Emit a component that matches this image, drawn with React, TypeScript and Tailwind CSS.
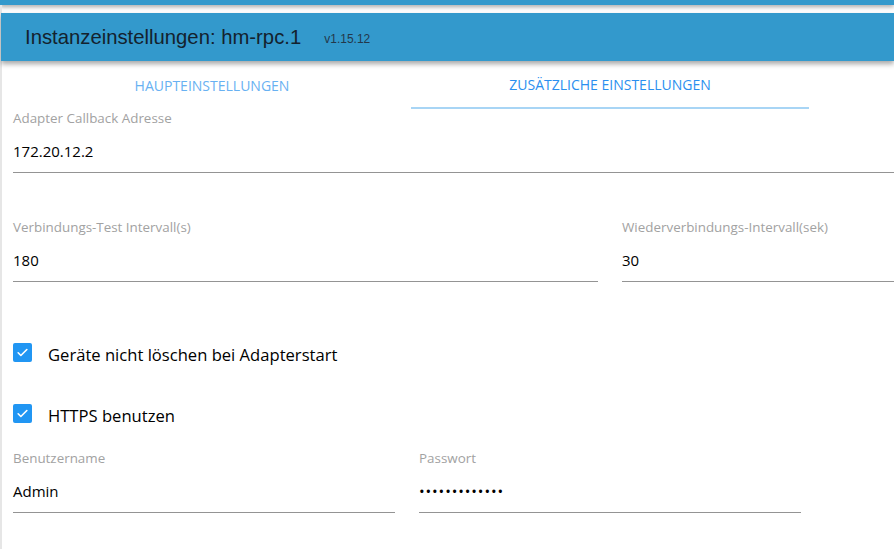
import React from 'react';

const sans = "font-['Open_Sans','Noto_Sans',sans-serif]";

function Field({ label, value, secret = false, className = '' }: { label: string; value: string; secret?: boolean; className?: string }) {
  return (
    <div className={`flex flex-col border-b border-[#949494] pb-[10px] ${className}`}>
      <div className="h-[18px] text-[13.4px] leading-[18px] text-[#a2a2a2]">{label}</div>
      <div className={`mt-[13px] h-[22px] leading-[22px] text-black ${secret ? 'text-[15px] tracking-[0.9px]' : 'text-[15px]'}`}>{value}</div>
    </div>
  );
}

function Check({ label }: { label: string }) {
  return (
    <div className="flex items-start h-[20px]">
      <div className="w-[19px] h-[19px] rounded-[2px] bg-[#2196f3] flex items-center justify-center">
        <svg width="13" height="13" viewBox="0 0 24 24" fill="none" stroke="white" strokeWidth="3" strokeLinecap="round" strokeLinejoin="round">
          <path d="M4 12.5l5 5L20 6.5" />
        </svg>
      </div>
      <span className="ml-[16px] mt-[2px] leading-[20px] text-[16.6px] text-black">{label}</span>
    </div>
  );
}

export default function App() {
  return (
    <div className={`w-[894px] h-[549px] bg-white overflow-hidden ${sans}`}>
      {/* top app bar edge */}
      <div className="h-[5px] bg-[#3399cc] shadow-[0_2px_4px_rgba(0,0,0,0.35)]" />

      <div className="h-[544px] border-l-2 border-[#e6e6e6] pt-[8px]">
        {/* header card */}
        <div className="-ml-[1px] h-[48px] bg-[#3399cc] shadow-[0_3px_5px_rgba(0,0,0,0.35)] flex items-center pl-[24px]">
          <span className="font-['Liberation_Sans',Arial,sans-serif] text-[20.3px] text-[#14222e]">Instanzeinstellungen: hm-rpc.1</span>
          <span className="ml-[23px] mt-[3px] font-['Liberation_Sans',Arial,sans-serif] text-[12px] text-[#24384a]">v1.15.12</span>
        </div>

        {/* tabs */}
        <div className="ml-[11px] flex h-[48px]">
          <div className="w-[398px] flex items-center justify-center text-[14px] text-[#68b1f2]">HAUPTEINSTELLUNGEN</div>
          <div className="w-[398px] flex items-center justify-center text-[14px] text-[#2b8fef] border-b-2 border-[#a8d5f5]">ZUSÄTZLICHE EINSTELLUNGEN</div>
        </div>

        <div className="pl-[11px]">
          <Field label="Adapter Callback Adresse" value="172.20.12.2" />

          <div className="mt-[45px] flex gap-[24px]">
            <Field className="w-[585px]" label="Verbindungs-Test Intervall(s)" value="180" />
            <Field className="flex-1" label="Wiederverbindungs-Intervall(sek)" value="30" />
          </div>

          <div className="mt-[61px]">
            <Check label="Geräte nicht löschen bei Adapterstart" />
          </div>
          <div className="mt-[41px]">
            <Check label="HTTPS benutzen" />
          </div>

          <div className="mt-[25px] flex gap-[24px]">
            <Field className="w-[382px]" label="Benutzername" value="Admin" />
            <Field className="w-[382px]" label="Passwort" value="•••••••••••••" secret />
          </div>
        </div>
      </div>
    </div>
  );
}
